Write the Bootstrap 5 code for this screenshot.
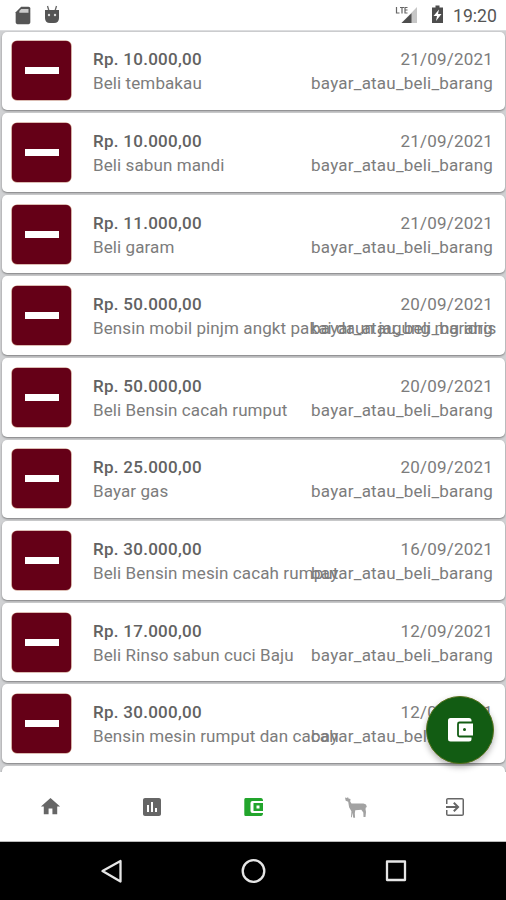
<!DOCTYPE html>
<html lang="id">
<head>
<meta charset="utf-8">
<meta name="viewport" content="width=device-width, initial-scale=1">
<title>Transaksi</title>
<link href="https://cdn.jsdelivr.net/npm/bootstrap@5.3.0/dist/css/bootstrap.min.css" rel="stylesheet">
<style>
body{font-family:Roboto,"Noto Sans",sans-serif;font-size:17px;line-height:24px;color:#7c7c7c;background:#fff}
.phone{width:506px;height:900px}
.status{height:30px;padding:0 9px 0 12px;color:#555}
.clock{font-size:17.6px;font-weight:400;letter-spacing:.05px;padding-top:1px}
.feed{height:742px;background:#d0d1d3;padding:.6px 1px 0 2px;border-top:1px solid #dcdddf}
.entry{height:78.6px;margin-bottom:3px;border-radius:5px;background:#fff;box-shadow:0 1px 2px rgba(0,0,0,.4);padding:0 12px 0 10px}
.tile{width:59px;height:59px;border-radius:5px;background:#650017;box-shadow:0 0 0 .6px #b77b68}
.tile i{width:34px;height:7px;background:#fff}
.info{display:grid;grid-template-columns:minmax(0,1fr);margin-left:22px;padding-top:1px;letter-spacing:.1px;white-space:nowrap;min-width:0}
.info>*{grid-row:1;grid-column:1}
.amount{font-weight:500;color:#626262;letter-spacing:.27px}
.kind{justify-self:end;text-align:right;letter-spacing:.21px}
.tabs{height:70px;border-bottom:1px solid #bbb}
.tabs>*{width:101.2px;color:#666;display:flex;justify-content:center}
.keys{height:58px;background:#000}
.fab{right:12px;bottom:136px;width:68px;height:68px;background:#125c13;border:1px solid #56711b;box-shadow:0 3px 6px rgba(0,0,0,.3);color:#fff}
svg{display:block}
</style>
</head>
<body>
<div class="phone position-relative overflow-hidden d-flex flex-column">
<header class="status d-flex align-items-center justify-content-between flex-shrink-0">
<div class="d-flex gap-1">
<svg width="22" height="22" viewBox="0 0 24 24" fill="#555"><path d="M18 3h-8L4 9v11c0 1.100.9 2 2 2h12c1.100 0 2-.9 2-2V5c0-1.100-.9-2-2-2z"/><path d="M10 5.500h8v4H8v-2z" fill="#ccc"/></svg>
<svg width="28" height="22" viewBox="0 0 28 22"><path d="M9.500 2l1.500 5M18.500 2l-1.500 5" stroke="#666" stroke-width="1.300"/><path d="M7 6h14v8q0 5-5 5h-4q-5 0-5-5z" fill="#555"/><circle cx="11" cy="11" r="1.200" fill="#ddd"/><circle cx="17" cy="11" r="1.200" fill="#ddd"/></svg>
</div>
<div class="d-flex align-items-center">
<svg width="28" height="22" viewBox="0 0 28 22"><path d="M24 3v16H8.500z" transform="translate(2)" fill="#c6c6c6"/><path d="M20.500 9.300V19h-10z" fill="#4d4d4d"/><path d="M5.500 3v6h3M9 3.500h4M11 3.500V9.500M16.500 3.500H14V9h2.500M14 6h2.500" fill="none" stroke="#666" stroke-width="1.200"/></svg>
<svg width="22" height="22" viewBox="0 0 22 22" class="ms-2 me-1"><path d="M8.500 1.500h4v2h3.500v15.500H5V3.500h3.500z" fill="#4d4d4d"/><path d="M12 5.500L6.500 12H10l-1 5 5.500-7H11z" fill="#fff"/></svg>
<span class="clock">19:20</span>
</div>
</header>
<main class="feed flex-shrink-0 overflow-hidden" id="feed"></main>
<nav class="tabs d-flex align-items-center flex-shrink-0 bg-white">
<span><svg width="23" height="23" viewBox="0 0 24 24" fill="currentColor"><path d="M10 20v-6h4v6h5v-8h3L12 3 2 12h3v8z"/></svg></span>
<span><svg width="24" height="24" viewBox="0 0 24 24" fill="currentColor"><path d="M19 3H5c-1.100 0-2 .9-2 2v14c0 1.100.9 2 2 2h14c1.100 0 2-.9 2-2V5c0-1.100-.9-2-2-2zM9 17H7v-7h2v7zm4 0h-2V7h2v10zm4 0h-2v-4h2v4z"/></svg></span>
<span><svg width="24" height="24" viewBox="0 0 24 24" fill="#22a52c" fill-rule="evenodd"><path d="M4 3h16q1.500 0 2 2v1H11.500Q9.500 6 9.500 8v8q0 2 2 2H22v1q-.5 2-2 2H4.500Q3.300 21 3.300 19.500v-15Q3.300 3 4.500 3zM12.500 8H22v8h-9.500zM15.500 10.500v3h3v-3z"/></svg></span>
<span><svg class="ms-1" width="24" height="24" viewBox="0 0 24 24" fill="#a2a2a2"><path d="M1 2.500l2 .5 1-1 .5 1.500 2 .5-.3 2.500 1.300 2h12l2.500 1 1 3-1-.5-.5 2 .5 3-.5 5h-2l-.2-4.500-2-2.700-6 .4-.5 3 .3 4.500h-1.800l-1-5-.4 4.500H7l.4-6-2.300-4-.9-5.500-2.500-1z"/></svg></span>
<span><svg width="24" height="24" viewBox="0 0 24 24" fill="currentColor"><path d="M10.090 15.590L11.500 17l5-5-5-5-1.410 1.410L12.670 11H3v2h9.670l-2.580 2.590zM19 3H5c-1.110 0-2 .9-2 2v4h1.500V4.500h15v15h-15V15H3v4c0 1.100.89 2 2 2h14c1.100 0 2-.9 2-2V5c0-1.100-.9-2-2-2z"/></svg></span>
</nav>
<footer class="keys d-flex justify-content-center flex-shrink-0">
<svg width="310" height="58" viewBox="0 0 310 58" fill="none" stroke="#e6e6e6" stroke-width="2.300" stroke-linejoin="round"><path d="M22.500 19v20.500L4.500 29z"/><circle cx="155.500" cy="29" r="10.800"/><path d="M289 19.500h18v18.500h-18z"/></svg>
</footer>
<div class="fab position-absolute rounded-circle d-flex align-items-center justify-content-center">
<svg width="25" height="24" viewBox="0 0 25 24"><rect width="23.500" height="23.500" rx="2.500" fill="#fff"/><path d="M26 4.500H11.500q-1.500 0-1.500 1.500v11q0 1.500 1.500 1.500H26z" fill="#fff" stroke="#125c13" stroke-width="1.800"/><circle cx="16.500" cy="11.500" r="1.500" fill="#125c13"/></svg>
</div>
</div>
<script>
const rows = [
["10.000","Beli tembakau","21/09/2021"],
["10.000","Beli sabun mandi","21/09/2021"],
["11.000","Beli garam","21/09/2021"],
["50.000","Bensin mobil pinjm angkt pakai daun jagung mg idris","20/09/2021"],
["50.000","Beli Bensin cacah rumput","20/09/2021"],
["25.000","Bayar gas","20/09/2021"],
["30.000","Beli Bensin mesin cacah rumput","16/09/2021"],
["17.000","Beli Rinso sabun cuci Baju","12/09/2021"],
["30.000","Bensin mesin rumput dan cacah","12/09/2021"]];
document.getElementById("feed").innerHTML = rows.map(([n,t,d]) => `<article class="entry d-flex align-items-center">
<div class="tile d-flex align-items-center justify-content-center flex-shrink-0"><i></i></div>
<div class="info flex-grow-1"><div><div class="amount">Rp. ${n},00</div><div>${t}</div></div>
<div class="kind"><div>${d}</div><div>bayar_atau_beli_barang</div></div></div></article>`).join("") + '<article class="entry"></article>';
</script>
<script src="https://cdn.jsdelivr.net/npm/bootstrap@5.3.0/dist/js/bootstrap.bundle.min.js"></script>
</body>
</html>
